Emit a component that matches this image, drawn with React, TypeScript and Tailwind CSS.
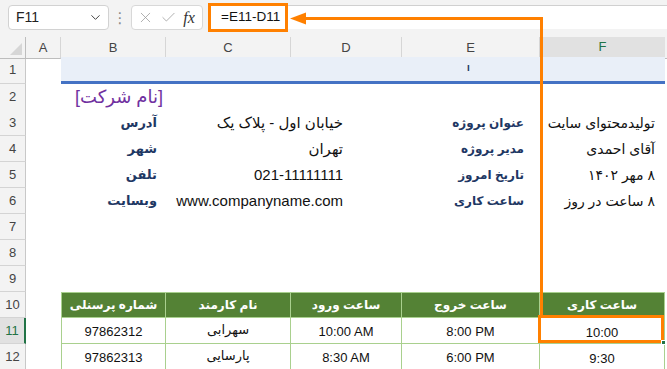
import React from "react";
import { ChevronDown, X, Check } from "lucide-react";

const COLS = "grid grid-cols-[26px_35px_105px_125px_111px_138px_125px_1fr]";

function RowHead({ n, sel = false }: { n: number; sel?: boolean }) {
  return (
    <div
      className={
        "flex items-center justify-center border-b border-[#d4d4d4] text-[13px] " +
        (sel
          ? "bg-[#e1e1e1] border-r-2 border-r-[#217346] text-[#217346]"
          : "bg-[#f3f3f3] border-r border-r-[#c8c8c8] text-[#444]")
      }
    >
      {n}
    </div>
  );
}

const label = "flex items-center justify-end font-bold text-[#1f3864] whitespace-nowrap";
const value = "flex items-center justify-end text-[#111] whitespace-nowrap";

export default function App() {
  return (
    <div className="relative w-[667px] h-[369px] overflow-hidden bg-white font-['Liberation_Sans','DejaVu_Sans',sans-serif]">
      {/* toolbar */}
      <div className="h-[37px] bg-[#f3f3f3] flex items-start pt-[5px] pl-[8px]">
        <div className="w-[101px] h-[25px] bg-white border border-[#d2d2d2] rounded-[4px] flex items-center justify-between pl-[7px] pr-[5px]">
          <span className="text-[14px] text-[#222]">F11</span>
          <ChevronDown size={15} strokeWidth={1.6} className="text-[#444]" />
        </div>
        <div className="w-[22px] h-[25px] flex items-center justify-center text-[#8a8a8a] text-[15px] leading-none">⋮</div>
        <div className="w-[72px] h-[25px] bg-white border border-[#d8d8d8] rounded-[4px] flex items-center justify-around px-[2px]">
          <X size={17} strokeWidth={1.1} className="text-[#9a9a9a]" />
          <Check size={17} strokeWidth={1.1} className="text-[#9a9a9a]" />
          <span className="italic text-[16px] text-[#333] font-['Liberation_Serif',serif] pr-[2px]">fx</span>
        </div>
        <div className="ml-[6px] flex-1 h-[24px] bg-white border-t border-[#d0d0d0] flex items-center pl-[12px]">
          <span className="text-[13.5px] text-[#111]">=E11-D11</span>
        </div>
      </div>

      {/* column headers */}
      <div className={COLS + " h-[20px]"}>
        <div className="bg-[#f3f3f3] border-r border-b border-[#bdbdbd] relative">
          <div className="absolute right-[3px] bottom-[3px] w-0 h-0 border-l-[12px] border-l-transparent border-b-[12px] border-b-[#d6d6d6]" />
        </div>
        {["A", "B", "C", "D", "E"].map((c) => (
          <div key={c} className="bg-[#f3f3f3] border-r border-[#d6d6d6] border-b border-b-[#bdbdbd] flex items-center justify-center text-[13px] text-[#444]">
            {c}
          </div>
        ))}
        <div className="bg-[#e1e1e1] border-b-2 border-[#217346] flex items-center justify-center text-[13px] text-[#217346]">F</div>
        <div className="bg-[#f3f3f3] border-b border-[#bdbdbd]" />
      </div>

      {/* row 1 */}
      <div className={COLS + " h-[27px]"}>
        <RowHead n={1} />
        <div />
        <div className="col-span-5 bg-[#e9eff8] border-b-[3px] border-[#4472c4] flex items-center pl-[406px] text-[8px] text-[#1f3864] font-bold">ا</div>
        <div />
      </div>

      {/* row 2 */}
      <div className={COLS + " h-[26px]"}>
        <RowHead n={2} />
        <div />
        <div className="flex items-center justify-end pr-[3px] text-[18px] text-[#7030a0] whitespace-nowrap">
          <span dir="rtl">[نام شرکت]</span>
        </div>
        <div className="col-span-5" />
      </div>

      {[
        [3, "آدرس", "خیابان اول - پلاک یک", "عنوان پروژه", "تولیدمحتوای سایت"],
        [4, "شهر", "تهران", "مدیر پروژه", "آقای احمدی"],
        [5, "تلفن", "021-11111111", "تاریخ امروز", "۸ مهر ۱۴۰۲"],
        [6, "وبسایت", "www.companyname.com", "ساعت کاری", "۸ ساعت در روز"],
      ].map(([n, a, b, c, d]) => (
        <div key={n as number} className={COLS + " h-[26px]"}>
          <RowHead n={n as number} />
          <div />
          <div className={label + " pr-[9px] text-[13px]"}><span dir="rtl">{a}</span></div>
          <div className={value + " col-span-2 pr-[59px] text-[15px]"}>
            <span dir={n === 5 || n === 6 ? "ltr" : "rtl"}>{b}</span>
          </div>
          <div className={label + " pr-[16px] text-[12px]"}><span dir="rtl">{c}</span></div>
          <div className={value + " pr-[10px] text-[14px]"}><span dir="rtl">{d}</span></div>
          <div />
        </div>
      ))}

      {[7, 8, 9].map((n) => (
        <div key={n} className={COLS + " h-[26px]"}>
          <RowHead n={n} />
          <div className="col-span-7" />
        </div>
      ))}

      {/* table header row 10 */}
      <div className={COLS + " h-[26px]"}>
        <RowHead n={10} />
        <div />
        {["شماره پرسنلی", "نام کارمند", "ساعت ورود", "ساعت خروج", "ساعت کاری"].map((h, i) => (
          <div
            key={h}
            className={
              "bg-[#548235] border-[#a9d08e] border-t border-b flex items-center justify-center text-[12px] font-bold text-white " +
              (i === 0 ? "border-l border-r" : "border-r")
            }
          >
            <span dir="rtl">{h}</span>
          </div>
        ))}
        <div />
      </div>

      {[
        [11, "97862312", "سهرابی", "10:00 AM", "8:00 PM", "10:00"],
        [12, "97862313", "پارسایی", "8:30 AM", "6:00 PM", "9:30"],
      ].map(([n, ...cells]) => (
        <div key={n as number} className={COLS + " h-[26px]"}>
          <RowHead n={n as number} sel={n === 11} />
          <div />
          {cells.map((c, i) => (
            <div
              key={i}
              className={
                "border-[#a9d08e] border-b flex justify-center text-[13px] text-[#111] " +
                (i === 0 ? "border-l border-r " : "border-r ") +
                (i === 1 ? "items-start pt-[2px]" : i === 4 ? "items-end pb-[1px]" : "items-center pt-[2px]")
              }
            >
              <span dir={i === 1 ? "rtl" : "ltr"}>{c}</span>
            </div>
          ))}
          <div />
        </div>
      ))}

      {/* overlays */}
      <div className="absolute left-[208px] top-[3px] w-[80px] h-[29px] border-[3px] border-[#ff8000]" />
      <div className="absolute left-[538px] top-[315px] w-[126px] h-[28px] border-[3px] border-[#ff8000]" />
      <div className="absolute left-[661px] top-[340px] w-[5px] h-[5px] bg-[#217346] border border-white" />
      <svg className="absolute left-0 top-0 pointer-events-none" width="667" height="369">
        <polygon points="290,18.5 306,12.5 306,24.5" fill="#ff8000" />
        <line x1="304" y1="18.5" x2="543" y2="18.5" stroke="#ff8000" strokeWidth="3" />
        <line x1="541.5" y1="17" x2="541.5" y2="316" stroke="#ff8000" strokeWidth="3" />
      </svg>
    </div>
  );
}
